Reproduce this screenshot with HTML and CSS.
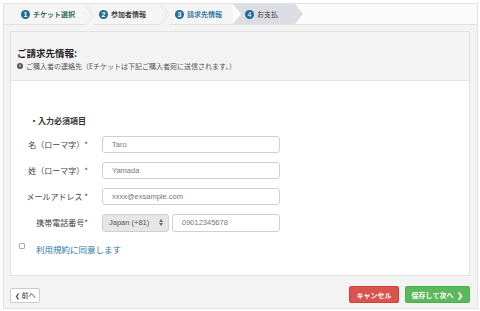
FILE: index.html
```html
<!DOCTYPE html>
<html lang="ja">
<head>
  <meta charset="UTF-8" />
  <title>ご請求先情報</title>
  <link rel="stylesheet" href="styles.css">
</head>
<body>
  <div class="frame">

    <!-- steps -->
    <div class="steps">
      <div class="step step-done"><span class="num">1</span>チケット選択</div>
      <svg class="sep" width="9" height="21" viewBox="0 0 9 21"><polyline points="0.5,0 8,10.5 0.5,21" fill="none" stroke="#dadada" stroke-width="2.4"/><polyline points="0.5,0 8,10.5 0.5,21" fill="none" stroke="#ffffff" stroke-width="1.2"/></svg>
      <div class="step step-done2"><span class="num">2</span>参加者情報</div>
      <svg class="sep" width="9" height="21" viewBox="0 0 9 21"><polyline points="0.5,0 8,10.5 0.5,21" fill="none" stroke="#dadada" stroke-width="2.4"/><polyline points="0.5,0 8,10.5 0.5,21" fill="none" stroke="#ffffff" stroke-width="1.2"/></svg>
      <div class="step step-cur"><span class="num">3</span>請求先情報</div>
      <div class="step step-active"><span class="num">4</span>お支払</div>
    </div>

    <div class="panel">
      <div class="panel-head">
        <h2>ご請求先情報:</h2>
        <p class="note"><span class="info">i</span>ご購入者の連絡先（Eチケットは下記ご購入者宛に送信されます。）</p>
      </div>
      <div class="panel-body">
        <p class="required">・入力必須項目</p>

        <div class="row">
          <label class="lbl">名（ローマ字）*</label>
          <input class="field" type="text" placeholder="Taro">
        </div>
        <div class="row">
          <label class="lbl">姓（ローマ字）*</label>
          <input class="field" type="text" placeholder="Yamada">
        </div>
        <div class="row">
          <label class="lbl">メールアドレス *</label>
          <input class="field" type="text" placeholder="xxxx@exsample.com">
        </div>
        <div class="row">
          <label class="lbl">携帯電話番号*</label>
          <div class="phone">
            <div class="select">Japan (+81)
              <svg class="arrows" width="4" height="7" viewBox="0 0 4 7"><path d="M0 3 L2 0 L4 3 Z M0 4 L2 7 L4 4 Z" fill="#666"/></svg>
            </div>
            <input class="field tel" type="text" placeholder="09012345678">
          </div>
        </div>

        <div class="agree">
          <span class="check"></span>
          <a class="terms">利用規約に同意します</a>
        </div>
      </div>
    </div>

    <div class="actions">
      <button class="btn btn-back"><span class="chev">❮</span>前へ</button>
      <div class="right">
        <button class="btn btn-cancel">キャンセル</button>
        <button class="btn btn-next">保存して次へ<span class="chev">❯</span></button>
      </div>
    </div>

  </div>
</body>
</html>
```
FILE: styles.css
```css
* {
  box-sizing: border-box;
}

body {
  margin: 0;
  background: #fff;
  font-family: "Noto Sans CJK JP", "Liberation Sans", sans-serif;
  color: #333;
}

.frame {
  margin: 3px 2px 2px 3px;
  height: 306px;
  border: 1px solid #e2e2e2;
  background: #f3f3f3;
  display: flex;
  flex-direction: column;
}

/* steps bar */
.steps {
  height: 21px;
  display: flex;
  align-items: stretch;
  background: #fbfbfb;
  border-bottom: 1px solid #e0e0e0;
}

.step {
  display: flex;
  align-items: center;
  font-size: 7px;
  font-weight: bold;
  color: #444;
  white-space: nowrap;
}

.num {
  width: 9px;
  height: 9px;
  border-radius: 50%;
  background: #1f6c93;
  color: #fff;
  font-size: 7px;
  line-height: 9px;
  text-align: center;
  margin-right: 3px;
  font-family: "Liberation Sans", sans-serif;
}

.step-done { width: 81px; padding-left: 17px; background: #f5f5f5; color: #2f6a55; }
.step-done2 { width: 66px; padding-left: 5px; background: #f5f5f5; }
.step-cur { width: 64px; padding-left: 6px; background: #f5f5f5; color: #3a7ca3; }
.sep { flex: none; background: #f5f5f5; }

.step-active {
  width: 70px;
  padding-left: 12px;
  background: #dcdde2;
  color: #333;
  font-weight: normal;
  clip-path: polygon(0 0, 62px 0, 70px 50%, 62px 100%, 0 100%, 8px 50%);
}

/* panel */
.panel {
  margin: 6px 7px 0 6px;
  height: 245px;
  border: 1px solid #e2e2e2;
  background: #fff;
  display: flex;
  flex-direction: column;
}

.panel-head {
  height: 49px;
  background: #f3f3f3;
  border-bottom: 1px solid #e4e4e4;
  padding: 14px 0 0 6px;
}

.panel-head h2 {
  margin: 0;
  font-size: 9.5px;
  line-height: 14px;
  color: #222;
}

.note {
  margin: 1px 0 0;
  font-size: 7px;
  line-height: 10px;
  color: #555;
  display: flex;
  align-items: center;
}

.info {
  width: 6px;
  height: 6px;
  border-radius: 50%;
  background: #555;
  color: #fff;
  font-size: 5px;
  line-height: 6px;
  text-align: center;
  margin-right: 3px;
  font-family: "Liberation Serif", serif;
  font-weight: bold;
}

.panel-body {
  padding: 34px 0 0 0;
}

.required {
  margin: 0 0 9px 19px;
  font-size: 8px;
  line-height: 12px;
  font-weight: bold;
  color: #333;
}

.row {
  display: flex;
  align-items: center;
  height: 17px;
  margin-bottom: 9px;
}

.lbl {
  width: 77px;
  text-align: right;
  font-size: 8px;
  color: #444;
  margin-right: 14px;
  white-space: nowrap;
}

.field {
  width: 178px;
  height: 17px;
  border: 1px solid #d0d0d0;
  border-radius: 3px;
  padding: 0 0 0 9px;
  font-size: 7.5px;
  font-family: "Liberation Sans", sans-serif;
  color: #666;
  background: #fff;
}

.field::placeholder {
  color: #777;
}

.phone {
  display: flex;
  gap: 3px;
  height: 18px;
}

.select {
  width: 67px;
  height: 18px;
  border: 1px solid #cfcfcf;
  border-radius: 3px;
  background: #e6e6e6;
  font-family: "Liberation Sans", sans-serif;
  font-size: 7.5px;
  color: #555;
  display: flex;
  align-items: center;
  justify-content: space-between;
  padding: 0 5px 0 6px;
}

.tel {
  width: 108px;
  height: 18px;
}

.agree {
  display: flex;
  align-items: center;
  margin: 12px 0 0 8px;
}

.check {
  width: 6px;
  height: 6px;
  border: 1px solid #aaa;
  border-radius: 1px;
  margin-right: 11px;
  margin-top: -6px;
}

.terms {
  font-size: 8.5px;
  color: #2a77a6;
}

/* bottom actions */
.actions {
  display: flex;
  justify-content: space-between;
  align-items: center;
  margin: 10px 7px 0 6px;
}

.right {
  display: flex;
  gap: 6px;
}

.btn {
  font-family: "Noto Sans CJK JP", "Liberation Sans", sans-serif;
  font-size: 7px;
  font-weight: bold;
  border-radius: 2px;
  height: 17px;
  padding: 0;
  display: flex;
  align-items: center;
  justify-content: center;
}

.btn-back {
  width: 30px;
  height: 15px;
  background: #fff;
  color: #333;
  border: 1px solid #ccc;
  font-weight: normal;
  margin-top: 1px;
}

.btn-back .chev {
  font-size: 6px;
  margin-right: 2px;
}

.btn-cancel {
  width: 50px;
  background: #d9534f;
  border: 1px solid #d43f3a;
  color: #fff;
}

.btn-next {
  width: 65px;
  background: #5cb85c;
  border: 1px solid #4cae4c;
  color: #fff;
}

.btn-next .chev {
  font-size: 7px;
  margin-left: 4px;
}
```
